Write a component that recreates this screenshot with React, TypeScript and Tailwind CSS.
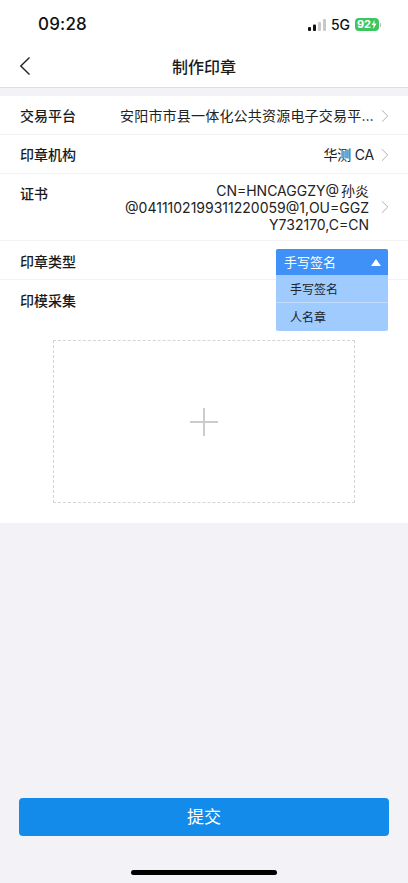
import { ChevronRight } from "lucide-react"

const cjk = { fontFamily: '"Inter", "Noto Sans CJK SC", sans-serif' }

const Row = ({ label, value, valueClass }: { label: string; value: string; valueClass?: string }) => (
  <div className="flex h-[39px] items-center justify-between border-b border-[#f3f3f5] pl-[20px] pr-[12px] pt-[1px]">
    <span className="text-[14px] font-medium text-[#1a1a1a]">{label}</span>
    <div className="flex items-center">
      <span className={`max-w-[254px] truncate text-[14px] text-[#222] ${valueClass ?? ""}`}>{value}</span>
      <ChevronRight size={22} strokeWidth={1} className="text-[#aaa]" />
    </div>
  </div>
)

const StatusBar = () => (
  <div className="flex h-[48px] items-center justify-between pl-[38px] pr-[27px] pt-[1px]">
    <span className="text-[17px] font-medium tracking-[0.2px] text-[#111]">09:28</span>
    <div className="flex items-center gap-[5px]">
      <svg width="18" height="12" viewBox="0 0 18 12">
        <rect x="0" y="8" width="3" height="4" rx="1" fill="#111" />
        <rect x="5" y="5.5" width="3" height="6.5" rx="1" fill="#111" />
        <rect x="10" y="3" width="3" height="9" rx="1" fill="#c8c8c8" />
        <rect x="15" y="0" width="3" height="12" rx="1" fill="#c8c8c8" />
      </svg>
      <span className="text-[14px] font-medium text-[#111]">5G</span>
      <div className="flex items-center gap-[1px]">
        <div className="flex h-[13px] w-[24px] items-center justify-center rounded-[4px] bg-[#3dc65f] text-[11px] leading-none font-bold text-white">
          92<svg width="6" height="9" viewBox="0 0 6 9"><path d="M3.6 0 0.5 5H2.6L2.2 9 5.5 3.6H3.3Z" fill="#fff" /></svg>
        </div>
        <div className="h-[4px] w-[1px] bg-[#bbb]" />
      </div>
    </div>
  </div>
)

export default function App() {
  return (
    <div className="flex h-[883px] w-[408px] flex-col overflow-hidden bg-[#f2f2f7]" style={cjk}>
      <div className="bg-white">
        <StatusBar />
        <div className="relative flex h-[40px] items-center justify-center border-b border-[#dfdfe2] pb-[2px]">
          <svg className="absolute left-[19px] top-[8px]" width="12" height="20" viewBox="0 0 12 20" fill="none">
            <path d="M10.5 1.5 1.8 10l8.7 8.5" stroke="#222" strokeWidth="1.4" />
          </svg>
          <span className="text-[16px] font-medium text-[#1a1a1a]">制作印章</span>
        </div>
      </div>

      <div className="mt-[8px] flex h-[427px] flex-col bg-white">
        <Row label="交易平台" value="安阳市市县一体化公共资源电子交易平台" valueClass="tracking-[0.2px]" />
        <Row label="印章机构" value="华测 CA" valueClass="tracking-[-0.2px]" />

        <div className="flex h-[67px] justify-between border-b border-[#f3f3f5] pl-[20px] pr-[12px] pt-[9px]">
          <span className="text-[14px] font-medium text-[#1a1a1a]">证书</span>
          <div className="-mt-[9px] flex items-center gap-[5px]">
            <span className="pt-[1px] text-right text-[14px] leading-[17px] whitespace-nowrap text-[#222]">
              CN=HNCAGGZY@<span className="ml-[2px]">孙炎</span>
              <br />
              @0411102199311220059@1,OU=GGZ
              <br />
              Y732170,C=CN
            </span>
            <ChevronRight size={22} strokeWidth={1} className="text-[#aaa]" />
          </div>
        </div>

        <div className="relative flex h-[39px] items-center border-b border-[#f3f3f5] pl-[20px] pt-[2px]">
          <span className="text-[14px] font-medium text-[#1a1a1a]">印章类型</span>
          <div className="absolute left-[276px] top-[8px] z-10 w-[112px] overflow-hidden rounded-[2px] bg-[#a0cbff]">
            <div className="flex h-[26px] items-center justify-between bg-[#3f91f7] pl-[8px] pr-[7px] pt-[1px] text-[13px] text-white">
              手写签名
              <div className="h-0 w-0 border-x-[5px] border-b-[7px] border-x-transparent border-b-white" />
            </div>
            <div className="flex h-[28px] items-center border-b border-[#c3ddff] pl-[14px] pt-[2px] text-[12px] text-[#222]">手写签名</div>
            <div className="flex h-[28px] items-center pl-[14px] pt-[2px] text-[12px] text-[#222]">人名章</div>
          </div>
        </div>

        <div className="flex flex-col">
          <div className="flex h-[39px] items-center pl-[20px] pt-[2px]">
            <span className="text-[14px] font-medium text-[#1a1a1a]">印模采集</span>
          </div>
          <div className="mx-[53px] mt-[21px] flex h-[163px] w-[302px] items-center justify-center border border-dashed border-[#d5d5d5]">
            <svg width="28" height="28" viewBox="0 0 28 28">
              <path d="M14 0V28M0 14H28" stroke="#ccc" strokeWidth="2" />
            </svg>
          </div>
        </div>
      </div>

      <div className="flex flex-1 flex-col items-center">
        <button className="mt-[275px] h-[38px] w-[370px] rounded-[4px] bg-[#128bea] pt-[2px] text-[17px] text-white">提交</button>
        <div className="mt-[34px] h-[5px] w-[146px] rounded-full bg-black" />
      </div>
    </div>
  )
}
